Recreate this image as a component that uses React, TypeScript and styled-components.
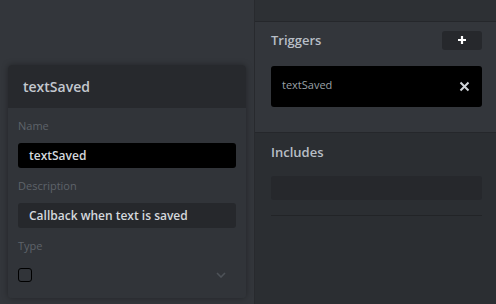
import styled, { createGlobalStyle } from "styled-components";

const GlobalStyle = createGlobalStyle`
  html, body {
    margin: 0;
    padding: 0;
    background: #33363b;
    font-family: "Open Sans", "Noto Sans", sans-serif;
  }
`;

const PlusIcon = () => (
  <svg width="10" height="10" viewBox="0 0 10 10">
    <path d="M5 1v8M1 5h8" stroke="#ffffff" strokeWidth="2.2" />
  </svg>
);

const CloseIcon = () => (
  <svg width="11" height="11" viewBox="0 0 11 11">
    <path d="M1.5 1.5l8 8M9.5 1.5l-8 8" stroke="#d0d4d9" strokeWidth="2" />
  </svg>
);

const ChevronIcon = () => (
  <svg width="10" height="6" viewBox="0 0 10 6">
    <path d="M1 1l4 4 4-4" stroke="#4d5258" strokeWidth="1.6" fill="none" />
  </svg>
);

export default function App() {
  return (
    <>
      <GlobalStyle />
      <Page>
        <LeftPane>
          <Card>
            <CardHeader>textSaved</CardHeader>
            <CardBody>
              <Label>Name</Label>
              <Field $dark>textSaved</Field>
              <Label>Description</Label>
              <Field>Callback when text is saved</Field>
              <Label>Type</Label>
              <TypeRow>
                <Checkbox />
                <ChevronIcon />
              </TypeRow>
            </CardBody>
          </Card>
        </LeftPane>
        <RightPane>
          <TopBand />
          <TriggersSection>
            <SectionHead>
              <SectionTitle>Triggers</SectionTitle>
              <AddButton>
                <PlusIcon />
              </AddButton>
            </SectionHead>
            <TriggerBox>
              <TriggerText>textSaved</TriggerText>
              <CloseIcon />
            </TriggerBox>
          </TriggersSection>
          <IncludesSection>
            <SectionTitle>Includes</SectionTitle>
            <EmptyBox />
            <Divider />
          </IncludesSection>
        </RightPane>
      </Page>
    </>
  );
}

const Page = styled.div`
  display: flex;
  width: 496px;
  height: 304px;
  overflow: hidden;
`;

const LeftPane = styled.div`
  width: 255px;
  flex-shrink: 0;
  background: #33363b;
  border-right: 1px solid #282a2e;
  padding: 65px 9px 0 8px;
  box-sizing: border-box;
`;

const Card = styled.div`
  width: 238px;
  height: 233px;
  border-radius: 4px;
  overflow: hidden;
  box-shadow: 0 0 6px rgba(0, 0, 0, 0.35);
  display: flex;
  flex-direction: column;
`;

const CardHeader = styled.div`
  height: 43px;
  background: #27292d;
  color: #c3c8cf;
  font-size: 14px;
  font-weight: 600;
  padding: 0 15px;
  display: flex;
  align-items: center;
`;

const CardBody = styled.div`
  flex: 1;
  background: #313439;
  padding: 10px 10px 0 10px;
  display: flex;
  flex-direction: column;
`;

const Label = styled.div`
  color: #5e636a;
  font-size: 11px;
  line-height: 16px;
  margin-bottom: 9px;
`;

const Field = styled.div<{ $dark?: boolean }>`
  height: 25px;
  border-radius: 3px;
  background: ${(p) => (p.$dark ? "#000000" : "#26282c")};
  color: #d4d8dd;
  font-size: 12px;
  font-weight: 600;
  padding: 0 11px;
  display: flex;
  align-items: center;
  margin-bottom: 10px;
`;

const TypeRow = styled.div`
  display: flex;
  justify-content: space-between;
  align-items: center;
  padding-right: 10px;
  margin-top: 5px;
`;

const Checkbox = styled.div`
  width: 12px;
  height: 12px;
  border: 1px solid #000000;
  border-radius: 3px;
`;

const RightPane = styled.div`
  flex: 1;
  display: flex;
  flex-direction: column;
  background: #2b2e32;
`;

const TopBand = styled.div`
  height: 21px;
  background: #2d3034;
  border-bottom: 1px solid #25272b;
`;

const TriggersSection = styled.div`
  background: #33363b;
  border-bottom: 1px solid #25272b;
  padding: 8px 14px 25px 16px;
  display: flex;
  flex-direction: column;
`;

const SectionHead = styled.div`
  display: flex;
  justify-content: space-between;
  align-items: center;
  margin-bottom: 16px;
`;

const SectionTitle = styled.div`
  color: #b8bec6;
  font-size: 13px;
  font-weight: 600;
  line-height: 20px;
`;

const AddButton = styled.div`
  width: 40px;
  height: 19px;
  border-radius: 3px;
  background: #26282c;
  display: flex;
  align-items: center;
  justify-content: center;
`;

const TriggerBox = styled.div`
  height: 41px;
  background: #000000;
  border-radius: 3px;
  display: flex;
  align-items: center;
  justify-content: space-between;
  padding: 0 12px 0 11px;
`;

const TriggerText = styled.div`
  color: #9ba0a7;
  font-size: 11px;
  margin-top: -4px;
`;

const IncludesSection = styled.div`
  padding: 9px 14px 0 16px;
  display: flex;
  flex-direction: column;
`;

const EmptyBox = styled.div`
  height: 24px;
  border-radius: 3px;
  background: #26282c;
  margin-top: 14px;
`;

const Divider = styled.div`
  height: 1px;
  background: #222427;
  margin-top: 15px;
`;
